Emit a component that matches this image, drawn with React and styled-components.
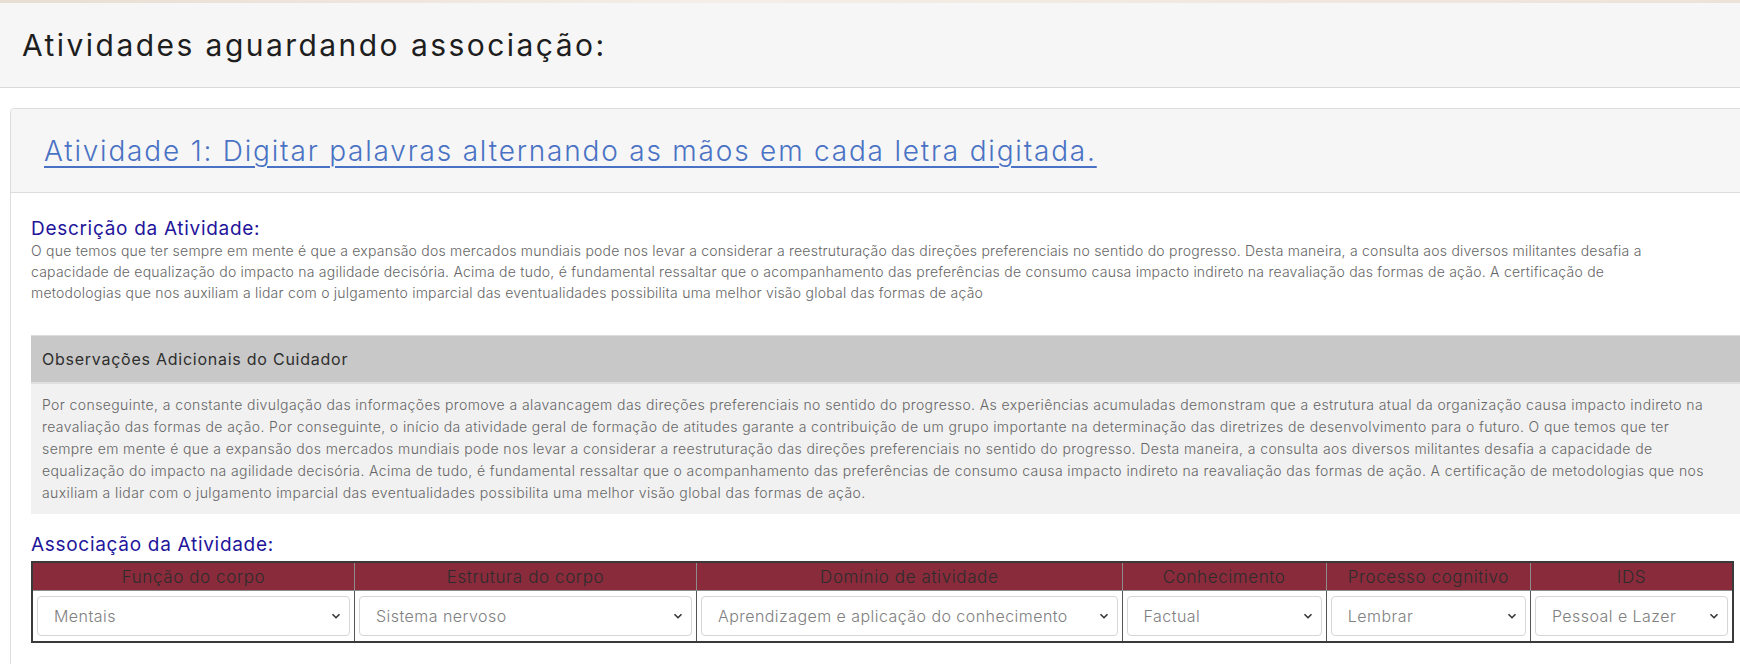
import React from 'react'
import { styled, createGlobalStyle } from 'styled-components'

const GlobalStyle = createGlobalStyle`
  html, body {
    margin: 0;
    padding: 0;
    background: #fff;
    overflow-x: hidden;
  }
  body {
    font-family: Inter, "Noto Sans", sans-serif;
    font-weight: 300;
    color: #555;
  }
`;

const Page = styled.div`
  width: 1780px;
`;

const TopStrip = styled.div`
  height: 3px;
  background: linear-gradient(90deg, #e8ddd2, #f4eee8 40%, #ece2d8);
`;

const PageHeader = styled.header`
  height: 84px;
  background: #f6f6f6;
  border-bottom: 1px solid #d9d9d9;
  display: flex;
  align-items: center;
  padding-left: 22px;
`;

const PageTitle = styled.h1`
  margin: 0;
  font-size: 30px;
  font-weight: 400;
  letter-spacing: 2.45px;
  color: #1e1e1e;
`;

const Card = styled.section`
  margin: 20px 0 0 10px;
  border: 1px solid #ddd;
  border-radius: 4px;
  width: 1760px;
`;

const CardHeader = styled.div`
  height: 83px;
  background: #f6f6f6;
  border-bottom: 1px solid #ddd;
  display: flex;
  align-items: center;
  padding-left: 33px;
  border-radius: 4px 4px 0 0;
`;

const ActivityLink = styled.a`
  font-size: 28px;
  font-weight: 300;
  color: #4a72c4;
  text-decoration: underline;
  text-underline-offset: 5px;
  text-decoration-thickness: 2px;
  letter-spacing: 1.8px;
  cursor: pointer;
`;

const CardBody = styled.div`
  padding: 25px 20px 22px 20px;
`;

const SectionTitle = styled.h3`
  margin: ${p => p.$top || 0}px 0 0 0;
  font-size: 19px;
  line-height: 22px;
  font-weight: 400;
  letter-spacing: 0.7px;
  color: #23159b;
`;

const BodyText = styled.p`
  margin: 0;
  font-size: 14px;
  line-height: 21px;
  letter-spacing: ${p => p.$ls || 0.23}px;
  color: #666;
  white-space: nowrap;
`;

const ObsBox = styled.div`
  margin-top: 32px;
  border-top: 1px solid #dcdcdc;
`;

const ObsHeader = styled.div`
  height: 46px;
  background: #c8c8c8;
  border-bottom: 2px solid #e0e0e0;
  display: flex;
  align-items: center;
  padding-left: 11px;
  font-size: 16px;
  font-weight: 400;
  letter-spacing: 0.75px;
  color: #2e2e2e;
`;

const ObsBody = styled.div`
  background: #f1f1f1;
  padding: 10px 11px 10px 11px;

  p {
    line-height: 22px;
  }
`;

const AssocTable = styled.table`
  margin-top: 5px;
  width: 1703px;
  border-collapse: collapse;
  border: 2px solid #3a3a3a;
`;

const Th = styled.th`
  background: #8a2b3c;
  height: 27px;
  padding: 0;
  border: 1px solid #8c8c8c;
  border-top: none;
  font-size: 17px;
  font-weight: 300;
  letter-spacing: 0.6px;
  color: #2c2c2c;
  width: ${p => p.$w}px;
`;

const Td = styled.td`
  padding: 5px 4px;
  border-left: 1px solid #555;
  background: #fff;
`;

const SelectBox = styled.div`
  position: relative;
  height: 38px;
  border: 1px solid #d6d6d6;
  border-radius: 4px;
  display: flex;
  align-items: center;
  padding-left: 16px;
  font-size: 16px;
  letter-spacing: 0.45px;
  color: #808080;
  background: #fff;

  svg {
    position: absolute;
    right: 8px;
    top: 14px;
  }
`;

const Footer = styled.div`
  display: flex;
  justify-content: flex-end;
  padding: 22px 30px 0 0;
  width: 1703px;
`;

const DarkButton = styled.button`
  width: 187px;
  height: 40px;
  background: #000;
  border: none;
  margin-right: 15px;
`;

const Chevron = () => (
  <svg width="10" height="10" viewBox="0 0 10 10">
    <path d="M1.5 3.2 L5 6.7 L8.5 3.2" fill="none" stroke="#333" strokeWidth="1.6" />
  </svg>
);

const columns = [
  { title: 'Função do corpo', value: 'Mentais', w: 323 },
  { title: 'Estrutura do corpo', value: 'Sistema nervoso', w: 343 },
  { title: 'Domínio de atividade', value: 'Aprendizagem e aplicação do conhecimento', w: 427 },
  { title: 'Conhecimento', value: 'Factual', w: 204 },
  { title: 'Processo cognitivo', value: 'Lembrar', w: 204 },
  { title: 'IDS', value: 'Pessoal e Lazer', w: 202 },
];

const App = () => {
  return (
    <Page>
      <GlobalStyle />
      <TopStrip />
      <PageHeader>
        <PageTitle>Atividades aguardando associação:</PageTitle>
      </PageHeader>
      <Card>
        <CardHeader>
          <ActivityLink>Atividade 1: Digitar palavras alternando as mãos em cada letra digitada.</ActivityLink>
        </CardHeader>
        <CardBody>
          <SectionTitle>Descrição da Atividade:</SectionTitle>
          <BodyText>O que temos que ter sempre em mente é que a expansão dos mercados mundiais pode nos levar a considerar a reestruturação das direções preferenciais no sentido do progresso. Desta maneira, a consulta aos diversos militantes desafia a</BodyText>
          <BodyText>capacidade de equalização do impacto na agilidade decisória. Acima de tudo, é fundamental ressaltar que o acompanhamento das preferências de consumo causa impacto indireto na reavaliação das formas de ação. A certificação de</BodyText>
          <BodyText>metodologias que nos auxiliam a lidar com o julgamento imparcial das eventualidades possibilita uma melhor visão global das formas de ação</BodyText>

          <ObsBox>
            <ObsHeader>Observações Adicionais do Cuidador</ObsHeader>
            <ObsBody>
              <BodyText $ls={0.4}>Por conseguinte, a constante divulgação das informações promove a alavancagem das direções preferenciais no sentido do progresso. As experiências acumuladas demonstram que a estrutura atual da organização causa impacto indireto na</BodyText>
              <BodyText $ls={0.4}>reavaliação das formas de ação. Por conseguinte, o início da atividade geral de formação de atitudes garante a contribuição de um grupo importante na determinação das diretrizes de desenvolvimento para o futuro. O que temos que ter</BodyText>
              <BodyText $ls={0.4}>sempre em mente é que a expansão dos mercados mundiais pode nos levar a considerar a reestruturação das direções preferenciais no sentido do progresso. Desta maneira, a consulta aos diversos militantes desafia a capacidade de</BodyText>
              <BodyText $ls={0.4}>equalização do impacto na agilidade decisória. Acima de tudo, é fundamental ressaltar que o acompanhamento das preferências de consumo causa impacto indireto na reavaliação das formas de ação. A certificação de metodologias que nos</BodyText>
              <BodyText $ls={0.4}>auxiliam a lidar com o julgamento imparcial das eventualidades possibilita uma melhor visão global das formas de ação.</BodyText>
            </ObsBody>
          </ObsBox>

          <SectionTitle $top={20}>Associação da Atividade:</SectionTitle>
          <AssocTable>
            <thead>
              <tr>
                {columns.map(c => <Th key={c.title} $w={c.w}>{c.title}</Th>)}
              </tr>
            </thead>
            <tbody>
              <tr>
                {columns.map(c => (
                  <Td key={c.title}>
                    <SelectBox>{c.value}<Chevron /></SelectBox>
                  </Td>
                ))}
              </tr>
            </tbody>
          </AssocTable>
          <Footer>
            <DarkButton />
          </Footer>
        </CardBody>
      </Card>
    </Page>
  )
}

export default App;
